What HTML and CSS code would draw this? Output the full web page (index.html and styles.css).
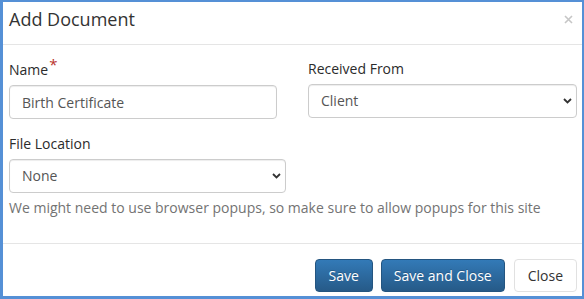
FILE: index.html
```html
<!DOCTYPE html>
<html>
<head>
<meta charset="utf-8">
<link rel="stylesheet" href="styles.css">
</head>
<body>
<div class="modal">
  <div class="modal-header">
    <h4 class="modal-title">Add Document</h4>
    <button class="close" type="button" aria-label="Close">
      <svg width="9" height="9" viewBox="0 0 9 9"><path d="M1 1L8 8M8 1L1 8" stroke="#c6c6c6" stroke-width="1.6" fill="none"/></svg>
    </button>
  </div>
  <div class="modal-body">
    <div class="row">
      <div class="form-group">
        <label class="label">Name<span class="req">*</span></label>
        <input class="form-control" type="text" value="Birth Certificate">
      </div>
      <div class="form-group">
        <label class="label">Received From</label>
        <div class="select-wrap">
          <select class="form-control"><option>Client</option></select>
          <svg class="chev" width="9" height="6" viewBox="0 0 9 6"><path d="M1 1L4.5 4.5L8 1" stroke="#333" stroke-width="1.8" fill="none"/></svg>
        </div>
      </div>
    </div>
    <div class="form-group last">
      <label class="label">File Location</label>
      <div class="select-wrap narrow">
        <select class="form-control"><option>None</option></select>
        <svg class="chev" width="9" height="6" viewBox="0 0 9 6"><path d="M1 1L4.5 4.5L8 1" stroke="#333" stroke-width="1.8" fill="none"/></svg>
      </div>
      <p class="help">We might need to use browser popups, so make sure to allow popups for this site</p>
    </div>
  </div>
  <div class="modal-footer">
    <button class="btn btn-primary save" type="button">Save</button>
    <button class="btn btn-primary" type="button">Save and Close</button>
    <button class="btn btn-default" type="button">Close</button>
  </div>
</div>
</body>
</html>
```

FILE: styles.css
```css
* { box-sizing: border-box; }
html, body { margin: 0; padding: 0; background: #fff; }
body {
  font-family: "Open Sans", "Liberation Sans", sans-serif;
  font-size: 14px;
  line-height: 20px;
  color: #333;
}
.modal {
  width: 584px;
  height: 299px;
  border-style: solid;
  border-color: #5590d6;
  border-width: 2px 2px 3px 3px;
  background: #fff;
  overflow: hidden;
}
.modal-header {
  height: 43px;
  border-bottom: 1px solid #e5e5e5;
  padding: 5px 9px 0 6px;
  display: flex;
  justify-content: space-between;
  align-items: flex-start;
}
.modal-title {
  margin: 0;
  font-size: 18px;
  font-weight: 400;
  line-height: 24px;
  color: #333;
}
.close {
  border: 0;
  background: none;
  padding: 0;
  margin: 8px 0 0 0;
  width: 9px;
  height: 9px;
  display: block;
}
.close svg { display: block; }
.modal-body {
  padding: 14px 5px 0 6px;
  height: 199px;
  border-bottom: 1px solid #e5e5e5;
}
.row {
  display: grid;
  grid-template-columns: 268px 269px;
  column-gap: 31px;
}
.form-group { margin-bottom: 15px; }
.form-group.last { margin-bottom: 0; }
.label {
  display: block;
  font-weight: 500;
  margin-bottom: 5px;
  line-height: 20px;
  color: #2b2b2b;
}
.req {
  color: #b9312d;
  font-size: 15px;
  position: relative;
  top: -5px;
  margin-left: 1px;
  font-weight: 400;
}
.form-control {
  display: block;
  width: 100%;
  height: 34px;
  padding: 6px 12px;
  font-family: inherit;
  font-size: 14px;
  line-height: 20px;
  color: #555;
  background: #fff;
  border: 1px solid #ccc;
  border-radius: 4px;
  box-shadow: inset 0 1px 1px rgba(0,0,0,.075);
  outline: none;
}
select.form-control {
  -webkit-appearance: none;
  appearance: none;
  padding-left: 12px;
}
.select-wrap { position: relative; }
.select-wrap.narrow { width: 277px; }
.chev {
  position: absolute;
  right: 5px;
  top: 14px;
  pointer-events: none;
}
.help {
  margin: 5px 0 0 0;
  color: #737373;
  line-height: 20px;
}
.modal-footer {
  padding: 15px 5px 0 6px;
  display: flex;
  justify-content: flex-end;
  gap: 8px;
}
.btn {
  height: 33px;
  padding: 0 12px;
  font-family: inherit;
  font-size: 14px;
  line-height: 20px;
  border-radius: 4px;
  border: 1px solid transparent;
}
.btn.save { padding: 0 13px; }
.btn-primary {
  color: #fff;
  background: linear-gradient(to bottom, #337ab7 0%, #265a88 100%);
  border-color: #245580;
  text-shadow: 0 -1px 0 rgba(0,0,0,.2);
}
.btn-default {
  color: #333;
  background: #fff;
  border-color: #e1e1e1;
  padding: 0 13px;
  margin-left: 1px;
}
```
